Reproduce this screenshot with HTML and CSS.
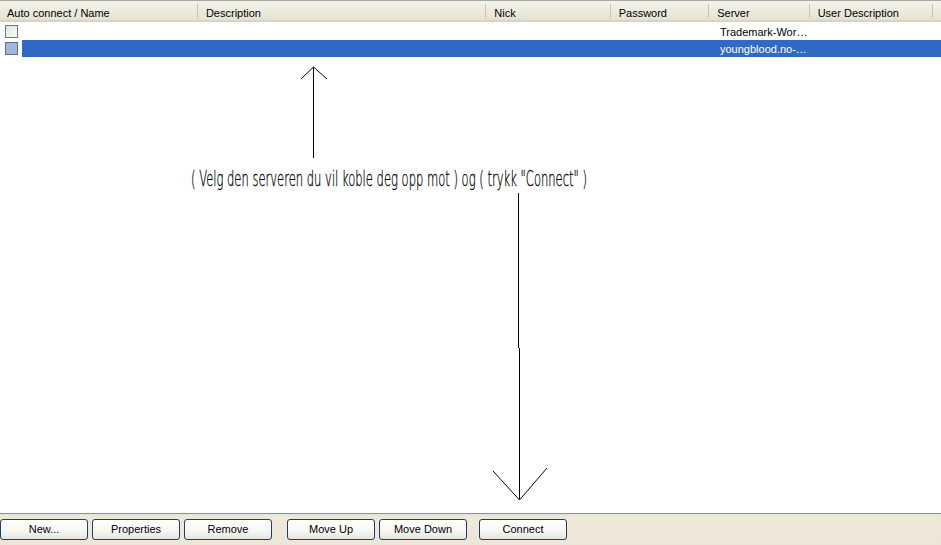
FILE: index.html
```html
<!DOCTYPE html>
<html>
<head>
<meta charset="utf-8">
<link rel="stylesheet" href="styles.css">
</head>
<body>
<div class="app">
  <div class="header">
    <div class="hcell c1">Auto connect / Name</div>
    <div class="hcell c2">Description</div>
    <div class="hcell c3">Nick</div>
    <div class="hcell c4">Password</div>
    <div class="hcell c5">Server</div>
    <div class="hcell c6">User Description</div>
    <div class="hcell c7"></div>
  </div>
  <div class="list">
    <div class="row">
      <div class="chk"><span class="box"></span></div>
      <div class="cells">
        <div class="cell w1"></div>
        <div class="cell w2"></div>
        <div class="cell w3"></div>
        <div class="cell w4"></div>
        <div class="cell w5">Trademark-Wor…</div>
        <div class="cell w6"></div>
      </div>
    </div>
    <div class="row">
      <div class="chk"><span class="box on"></span></div>
      <div class="cells sel">
        <div class="cell w1"></div>
        <div class="cell w2"></div>
        <div class="cell w3"></div>
        <div class="cell w4"></div>
        <div class="cell w5">youngblood.no-…</div>
        <div class="cell w6"></div>
      </div>
    </div>
  </div>
  <div class="footer">
    <button class="btn">New...</button>
    <button class="btn">Properties</button>
    <button class="btn">Remove</button>
    <span class="spacer s1"></span>
    <button class="btn">Move Up</button>
    <button class="btn">Move Down</button>
    <span class="spacer s2"></span>
    <button class="btn">Connect</button>
  </div>
  <svg class="overlay" width="941" height="545" viewBox="0 0 941 545">
    <g stroke="#000" stroke-width="1" fill="none">
      <line x1="313.5" y1="67" x2="313.5" y2="158" shape-rendering="crispEdges"/>
      <polyline points="301,79 313.5,67 327,79"/>
      <line x1="518.5" y1="193" x2="518.5" y2="348" shape-rendering="crispEdges"/>
      <line x1="519.5" y1="348" x2="519.5" y2="499" shape-rendering="crispEdges"/>
      <polyline points="493,471 519.5,500 547,468"/>
    </g>
    <text class="note" x="191" y="186" textLength="396" lengthAdjust="spacingAndGlyphs">( Velg den serveren du vil koble deg opp mot ) og ( trykk "Connect" )</text>
  </svg>
</div>
</body>
</html>
```
FILE: styles.css
```css
html, body {
  margin: 0;
  padding: 0;
  background: #ffffff;
}
body {
  width: 941px;
  height: 545px;
  overflow: hidden;
  font-family: "Liberation Sans", Arial, sans-serif;
  font-size: 11px;
  color: #000;
}
.app {
  position: relative;
  width: 941px;
  height: 545px;
  display: flex;
  flex-direction: column;
}
.header {
  height: 19px;
  flex: none;
  display: flex;
  border-top: 1px solid #a9a8a0;
  border-bottom: 2px solid #d8d4c4;
  background: linear-gradient(#f3f2ea, #ebeadb 60%, #e4e1d2);
  box-sizing: content-box;
}
.hcell {
  position: relative;
  box-sizing: border-box;
  padding-left: 8px;
  padding-top: 3px;
  line-height: 18px;
  white-space: nowrap;
  overflow: hidden;
}
.hcell::after {
  content: "";
  position: absolute;
  right: 0;
  top: 3px;
  bottom: 2px;
  width: 1px;
  background: #c7c5b2;
  box-shadow: 1px 0 0 #ffffff;
}
.c1 { width: 199px; padding-left: 7px; }
.c2 { width: 290px; }
.c3 { width: 125px; }
.c4 { width: 99px; }
.c5 { width: 101px; }
.c6 { width: 124px; }
.c7 { flex: 1; }
.c7::after { display: none; }
.list {
  flex: 1;
  background: #ffffff;
  padding-top: 1px;
}
.row {
  display: flex;
  height: 17px;
  align-items: center;
}
.chk {
  width: 22px;
  height: 100%;
  display: flex;
  align-items: center;
  padding-left: 5px;
  box-sizing: border-box;
}
.box {
  width: 11px;
  height: 11px;
  border: 1px solid #6f7785;
  background: linear-gradient(135deg, #e3e3dd, #fbfbf8);
}
.box.on {
  background: #9fb7df;
  border-color: #5f6f88;
}
.cells {
  flex: 1;
  height: 100%;
  display: flex;
  align-items: center;
}
.cells.sel {
  background: #316ac5;
  color: #ffffff;
}
.cell {
  white-space: nowrap;
  overflow: hidden;
  box-sizing: border-box;
}
.w1 { width: 177px; }
.w2 { width: 290px; }
.w3 { width: 125px; }
.w4 { width: 99px; }
.w5 { width: 101px; padding-left: 7px; }
.w6 { flex: 1; }
.footer {
  height: 32px;
  flex: none;
  box-sizing: border-box;
  border-top: 1px solid #87998a;
  background: linear-gradient(#e1e3d8, #efe8d6 3px, #ebe6d8);
  display: flex;
  align-items: flex-start;
  padding: 5px 0 0 0;
  gap: 4px;
}
.s1 { width: 7px; }
.s2 { width: 4px; }
.btn {
  width: 88px;
  height: 21px;
  margin: 0;
  padding: 0;
  border: 1px solid #1a3f6e;
  border-radius: 3px;
  background: linear-gradient(#ffffff, #f6f6f2 60%, #e6e4dc);
  font-family: "Liberation Sans", Arial, sans-serif;
  font-size: 11px;
  line-height: 19px;
  color: #000;
  text-align: center;
}
.overlay {
  position: absolute;
  left: 0;
  top: 0;
  pointer-events: none;
}
.note {
  font-family: "DejaVu Sans", sans-serif;
  font-weight: 200;
  font-size: 22px;
  fill: #000;
  stroke: #000;
  stroke-width: 0.35;
}
```
